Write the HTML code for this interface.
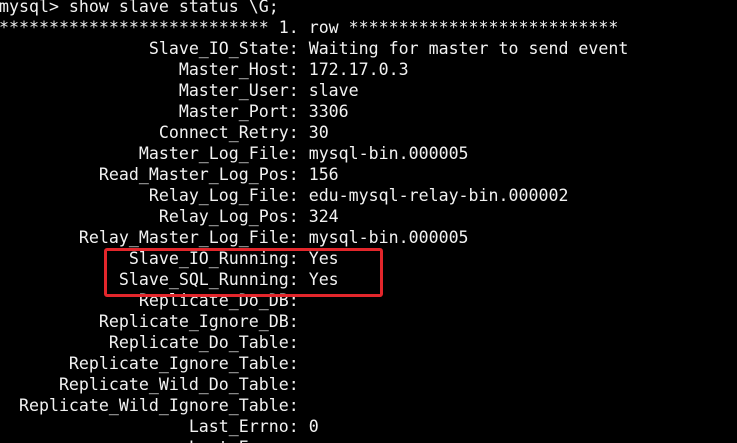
<!DOCTYPE html>
<html><head><style>
html,body{margin:0;padding:0;background:#000;width:737px;height:443px;overflow:hidden;position:relative}
pre{position:absolute;left:-1px;top:-4px;margin:0;font-family:"DejaVu Sans Mono","Liberation Mono",monospace;font-size:16.6px;line-height:21px;color:#f2f2f2;white-space:pre}
.box{position:absolute;left:104px;top:248px;width:273px;height:43px;border:3px solid #e3262b;border-radius:3px}
</style></head><body>
<pre>mysql&gt; show slave status \G;
*************************** 1. row ***************************
               Slave_IO_State: Waiting for master to send event
                  Master_Host: 172.17.0.3
                  Master_User: slave
                  Master_Port: 3306
                Connect_Retry: 30
              Master_Log_File: mysql-bin.000005
          Read_Master_Log_Pos: 156
               Relay_Log_File: edu-mysql-relay-bin.000002
                Relay_Log_Pos: 324
        Relay_Master_Log_File: mysql-bin.000005
             Slave_IO_Running: Yes
            Slave_SQL_Running: Yes
              Replicate_Do_DB:
          Replicate_Ignore_DB:
           Replicate_Do_Table:
       Replicate_Ignore_Table:
      Replicate_Wild_Do_Table:
  Replicate_Wild_Ignore_Table:
                   Last_Errno: 0
                   Last_Error:</pre>
<div class="box"></div>
</body></html>
